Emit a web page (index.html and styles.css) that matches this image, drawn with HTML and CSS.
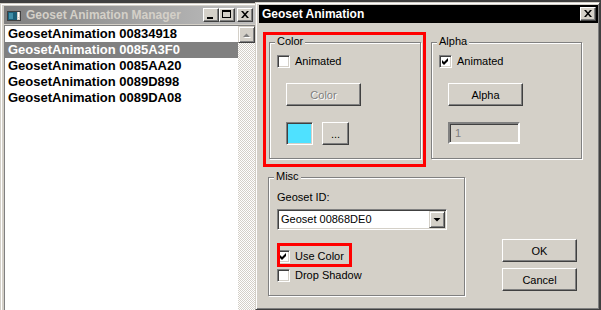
FILE: index.html
```html
<!DOCTYPE html>
<html lang="en">
<head>
  <meta charset="UTF-8" />
  <title>Geoset Animation</title>
  <link rel="stylesheet" href="styles.css">
</head>
<body>

  <!-- Manager window (inactive, behind the dialog) -->
  <div class="window manager">
    <div class="titlebar inactive">
      <svg class="app-icon" width="16" height="16" viewBox="0 0 16 16">
        <rect x="1.5" y="4.5" width="13" height="9" fill="#d4d0c8" stroke="#404040"/>
        <rect x="2" y="5" width="9" height="8" fill="#1b5f78"/>
        <rect x="3" y="6" width="4" height="6" fill="#3f8fa8"/>
        <rect x="12" y="5" width="1" height="5" fill="#fff"/>
        <rect x="12" y="11" width="1" height="1" fill="#fff"/>
      </svg>
      <span class="caption">Geoset Animation Manager</span>
      <div class="caption-buttons">
        <span class="cbtn"><svg width="14" height="12"><rect x="3" y="8" width="6" height="2" fill="#000"/></svg></span>
        <span class="cbtn"><svg width="14" height="12"><path d="M2 1h9v2H2z M2 3h1v6H2z M10 3h1v6h-1z M2 8h9v1H2z" fill="#000"/></svg></span>
        <span class="cbtn gap"><svg width="14" height="12"><polygon points="3,2 5,2 11,9 9,9" fill="#000"/><polygon points="9,2 11,2 5,9 3,9" fill="#000"/></svg></span>
      </div>
    </div>
    <div class="listbox">
      <ul class="items">
        <li>GeosetAnimation 00834918</li>
        <li class="selected">GeosetAnimation 0085A3F0</li>
        <li>GeosetAnimation 0085AA20</li>
        <li>GeosetAnimation 0089D898</li>
        <li>GeosetAnimation 0089DA08</li>
      </ul>
      <div class="vscroll">
        <span class="sbtn">
          <svg width="15" height="15"><polygon points="5,11 12,11 8.5,7.5" fill="#fff"/><polygon points="4,10 11,10 7.5,6.5" fill="#808080"/></svg>
        </span>
        <div class="track"></div>
      </div>
    </div>
  </div>

  <!-- Geoset Animation dialog -->
  <div class="window dialog">
    <div class="titlebar active">
      <span class="caption">Geoset Animation</span>
      <span class="cbtn"><svg width="14" height="12"><polygon points="3,2 5,2 11,9 9,9" fill="#000"/><polygon points="9,2 11,2 5,9 3,9" fill="#000"/></svg></span>
    </div>

    <div class="dialog-body">
      <div class="top-row">
        <div class="group color-group">
          <span class="group-title">Color</span>
          <label class="check"><span class="box"></span>Animated</label>
          <button class="btn wide disabled">Color</button>
          <div class="swatch-row">
            <span class="swatch"></span>
            <button class="btn small">...</button>
          </div>
        </div>

        <div class="group alpha-group">
          <span class="group-title">Alpha</span>
          <label class="check"><span class="box"><svg width="7" height="7"><polygon points="0,2 2,4 6,0 6,3 2,7 0,5" fill="#000"/></svg></span>Animated</label>
          <button class="btn wide">Alpha</button>
          <div class="field disabled">1</div>
        </div>
      </div>

      <div class="bottom-row">
        <div class="group misc-group">
          <span class="group-title">Misc</span>
          <div class="label">Geoset ID:</div>
          <div class="combo">
            <span class="combo-text">Geoset 00868DE0</span>
            <span class="drop"><svg width="14" height="15"><polygon points="3.5,6 10.5,6 7,9.5" fill="#000"/></svg></span>
          </div>
          <label class="check use-color"><span class="box"><svg width="7" height="7"><polygon points="0,2 2,4 6,0 6,3 2,7 0,5" fill="#000"/></svg></span>Use Color</label>
          <label class="check drop-shadow"><span class="box"></span>Drop Shadow</label>
        </div>

        <div class="actions">
          <button class="btn wide">OK</button>
          <button class="btn wide">Cancel</button>
        </div>
      </div>

      <!-- red highlight marks -->
      <div class="mark mark-color"></div>
      <div class="mark mark-use"></div>
    </div>
  </div>

</body>
</html>
```

FILE: styles.css
```css
* {
  box-sizing: border-box;
}

body {
  margin: 0;
  width: 601px;
  height: 310px;
  overflow: hidden;
  position: relative;
  background: #404040;
  font-family: "Liberation Sans", Arial, sans-serif;
  font-size: 11px;
  color: #000;
}

/* window frames */
.window {
  position: absolute;
  display: flex;
  flex-direction: column;
  background: #d4d0c8;
  border: 1px solid;
  border-color: #d4d0c8 #404040 #404040 #d4d0c8;
  box-shadow: inset 1px 1px #fff, inset -1px -1px #808080;
}

.manager {
  left: 0;
  top: 3px;
  width: 259px;
  height: 320px;
  padding: 2px 3px 0 3px;
}

.dialog {
  left: 255px;
  top: 2px;
  width: 345px;
  height: 308px;
  padding: 2px 1px 0 3px;
}

.titlebar {
  flex-shrink: 0;
  height: 18px;
  display: flex;
  align-items: center;
  padding: 0 2px;
  font-size: 12px;
  font-weight: bold;
}

.titlebar.inactive {
  background: linear-gradient(to right, #808080, #c0c0c0);
  color: #d4d0c8;
}

.titlebar.active {
  background: #000;
  color: #fff;
  padding-left: 3px;
}

.app-icon {
  display: block;
}

.caption {
  flex: 1;
  white-space: nowrap;
}

.inactive .caption {
  margin-left: 4px;
}

.caption-buttons {
  display: flex;
}

.cbtn {
  width: 16px;
  height: 14px;
  display: flex;
  background: #d4d0c8;
  border: 1px solid;
  border-color: #fff #404040 #404040 #fff;
  box-shadow: inset -1px -1px #808080;
}

.cbtn.gap {
  margin-left: 2px;
}

/* manager list */
.listbox {
  flex: 1;
  display: flex;
  margin-top: 1px;
  background: #fff;
  border-top: 1px solid #808080;
  border-left: 1px solid #808080;
}

.items {
  flex: 1;
  margin: 0;
  padding: 0;
  list-style: none;
  font-size: 13px;
  font-weight: bold;
}

.items li {
  height: 16px;
  line-height: 16px;
  padding-left: 3px;
  white-space: nowrap;
}

.items li.selected {
  background: #808080;
  color: #fff;
}

.vscroll {
  width: 17px;
  display: flex;
  flex-direction: column;
}

.sbtn {
  width: 17px;
  height: 17px;
  display: flex;
  background: #d4d0c8;
  border: 1px solid;
  border-color: #d4d0c8 #404040 #404040 #d4d0c8;
  box-shadow: inset 1px 1px #fff, inset -1px -1px #808080;
}

.track {
  flex: 1;
  background-image: repeating-conic-gradient(#d4d0c8 0 25%, #fff 0 50%);
  background-size: 2px 2px;
}

/* dialog body */
.dialog-body {
  position: relative;
  flex: 1;
  padding: 19px 0 0 10px;
}

.top-row {
  display: flex;
  gap: 10px;
}

.group {
  position: relative;
  border: 1px solid #808080;
  box-shadow: inset 1px 1px #fff, 1px 1px #fff;
}

.group-title {
  position: absolute;
  top: -8px;
  left: 5px;
  padding: 0 2px;
  line-height: 13px;
  background: #d4d0c8;
}

.color-group {
  width: 152px;
  height: 117px;
  padding: 12px 7px;
}

.alpha-group {
  width: 151px;
  height: 117px;
  padding: 12px 7px;
}

.check {
  display: flex;
  align-items: center;
  gap: 5px;
  line-height: 13px;
  white-space: nowrap;
}

.box {
  width: 13px;
  height: 13px;
  display: flex;
  background: #fff;
  border: 1px solid;
  border-color: #808080 #fff #fff #808080;
  box-shadow: inset 1px 1px #404040, inset -1px -1px #d4d0c8;
}

.box svg {
  display: block;
  margin: 2px 0 0 2px;
}

.btn {
  display: flex;
  align-items: center;
  justify-content: center;
  height: 23px;
  padding: 0;
  background: #d4d0c8;
  font-family: inherit;
  font-size: 11px;
  color: #000;
  border: 1px solid;
  border-color: #fff #404040 #404040 #fff;
  box-shadow: inset -1px -1px #808080;
}

.btn.wide {
  width: 75px;
}

.btn.small {
  width: 27px;
}

.btn.disabled {
  color: #808080;
  text-shadow: 1px 1px #fff;
}

.color-group .btn.wide,
.alpha-group .btn.wide {
  margin: 15px 0 0 9px;
}

.swatch-row {
  display: flex;
  gap: 9px;
  margin: 16px 0 0 9px;
}

.swatch {
  width: 27px;
  height: 23px;
  background: #4fe1ff;
  border: 1px solid;
  border-color: #808080 #fff #fff #808080;
  box-shadow: inset 1px 1px #404040, inset -1px -1px #d4d0c8;
}

.field {
  width: 72px;
  height: 22px;
  margin: 16px 0 0 9px;
  padding-left: 5px;
  line-height: 18px;
  border: 2px solid;
  border-color: #808080 #fff #fff #808080;
  box-shadow: inset 1px 1px #404040;
}

.field.disabled {
  color: #808080;
}

.bottom-row {
  display: flex;
  margin-top: 18px;
}

.misc-group {
  width: 197px;
  height: 119px;
  margin-left: -1px;
  padding: 13px 8px 0 8px;
}

.label {
  line-height: 13px;
}

.combo {
  display: flex;
  width: 170px;
  height: 21px;
  margin-top: 5px;
  background: #fff;
  border: 1px solid;
  border-color: #808080 #fff #fff #808080;
  box-shadow: inset 1px 1px #404040, inset -1px -1px #d4d0c8;
  padding: 1px;
}

.combo-text {
  flex: 1;
  padding-left: 2px;
  line-height: 17px;
}

.drop {
  width: 16px;
  height: 17px;
  display: flex;
  background: #d4d0c8;
  border: 1px solid;
  border-color: #d4d0c8 #404040 #404040 #d4d0c8;
  box-shadow: inset 1px 1px #fff, inset -1px -1px #808080;
}

.use-color {
  margin-top: 20px;
}

.drop-shadow {
  margin-top: 6px;
}

.actions {
  display: flex;
  flex-direction: column;
  gap: 6px;
  margin: 62px 0 0 37px;
}

/* red annotation boxes */
.mark {
  position: absolute;
  border: 3px solid #f00;
}

.mark-color {
  left: 4px;
  top: 9px;
  width: 163px;
  height: 135px;
}

.mark-use {
  left: 18px;
  top: 220px;
  width: 75px;
  height: 24px;
}
```
